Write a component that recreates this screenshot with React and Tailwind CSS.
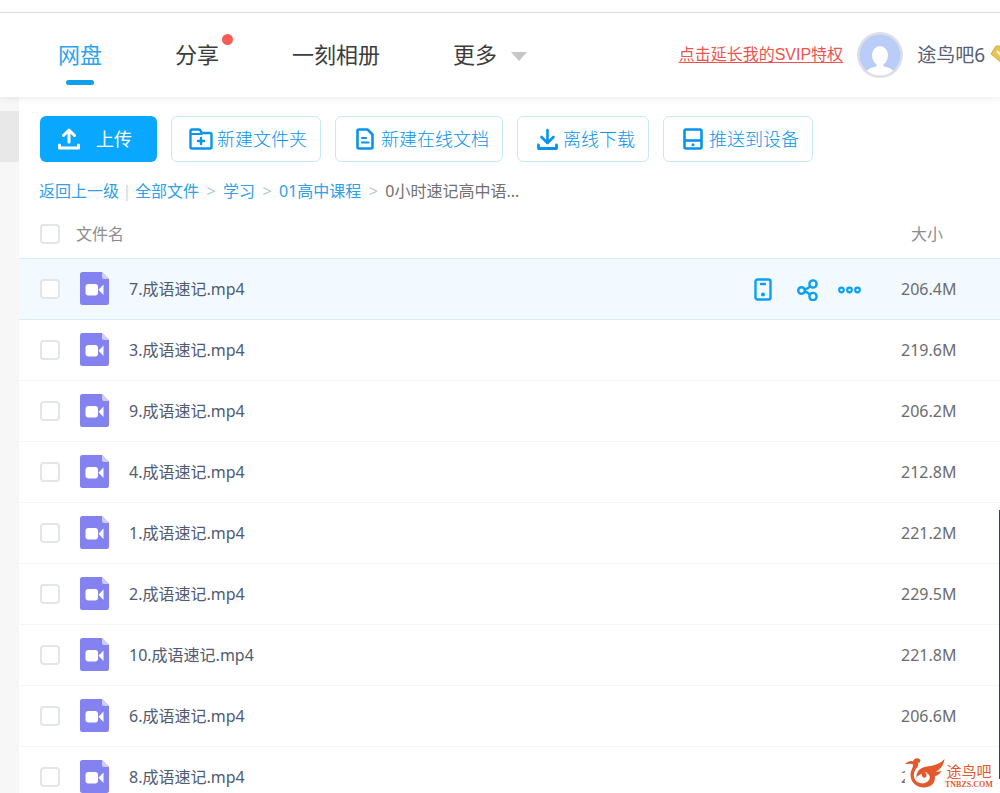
import { useState } from 'react';

const navItems = [
  { label: '网盘', active: true },
  { label: '分享', badge: true },
  { label: '一刻相册' },
];

const files = [
  { name: '7.成语速记.mp4', size: '206.4M' },
  { name: '3.成语速记.mp4', size: '219.6M' },
  { name: '9.成语速记.mp4', size: '206.2M' },
  { name: '4.成语速记.mp4', size: '212.8M' },
  { name: '1.成语速记.mp4', size: '221.2M' },
  { name: '2.成语速记.mp4', size: '229.5M' },
  { name: '10.成语速记.mp4', size: '221.8M' },
  { name: '6.成语速记.mp4', size: '206.6M' },
  { name: '8.成语速记.mp4', size: '2' },
];

const checkboxStyle =
  'block size-5 appearance-none rounded border-2 border-[#e2e6ea] bg-white checked:border-[#09aaff] checked:bg-[#09aaff]';

function UploadIcon() {
  return (
    <svg width="22" height="22" viewBox="0 0 22 22" fill="none" stroke="currentColor" strokeWidth="3" strokeLinecap="round" strokeLinejoin="round">
      <path d="M11 14V3M5.5 7.5 11 2l5.5 5.5" />
      <path d="M1.5 17v3h19v-3" />
    </svg>
  );
}

function FolderPlusIcon() {
  return (
    <svg width="24" height="22" viewBox="0 0 24 22" fill="none" stroke="currentColor" strokeWidth="2.4" strokeLinejoin="round">
      <path d="M1.5 19V3q0-1.500 1.500-1.500h7q1 0 1.500 1L12.500 5H21q1.500 0 1.500 1.500V19q0 1.500-1.500 1.500H3Q1.500 20.500 1.500 19Z" />
      <path d="M1.500 6h12" strokeWidth="2" />
      <path d="M12 10v6M9 13h6" strokeLinecap="round" />
    </svg>
  );
}

function DocIcon() {
  return (
    <svg width="18" height="22" viewBox="0 0 18 22" fill="none" stroke="currentColor" strokeWidth="2.6" strokeLinejoin="round">
      <path d="M3 1.500h8.500l5 5V19q0 1.500-1.500 1.500H3Q1.500 20.500 1.500 19V3Q1.500 1.500 3 1.500Z" />
      <path d="M6 10h4M6 14.500h6.500" strokeWidth="2.200" strokeLinecap="round" />
    </svg>
  );
}

function DownloadIcon() {
  return (
    <svg width="21" height="22" viewBox="0 0 21 22" fill="none" stroke="currentColor" strokeWidth="2.6" strokeLinecap="round" strokeLinejoin="round">
      <path d="M10.500 2v12.500M4.500 9l6 6 6-6" />
      <path d="M1.500 17v3.500h18V17" strokeWidth="2.800" />
    </svg>
  );
}

function DeviceIcon() {
  return (
    <svg width="20" height="22" viewBox="0 0 20 22" fill="none" stroke="currentColor" strokeWidth="2.6">
      <rect x="1.500" y="1.500" width="17" height="19" rx="1.500" />
      <path d="M1.500 12.500h17" />
      <circle cx="10" cy="16.700" r="1.500" fill="currentColor" stroke="none" />
    </svg>
  );
}

function PhoneIcon() {
  return (
    <svg width="18" height="23" viewBox="0 0 18 23" fill="none" stroke="currentColor" strokeWidth="2.400">
      <rect x="1.500" y="1.500" width="15" height="20" rx="2" />
      <path d="M6 6h6" />
      <circle cx="9" cy="16.500" r="2" fill="currentColor" stroke="none" />
    </svg>
  );
}

function ShareIcon() {
  return (
    <svg width="21" height="22" viewBox="0 0 21 22" fill="none" stroke="currentColor" strokeWidth="2.400">
      <circle cx="4.500" cy="11.500" r="3.300" />
      <circle cx="16" cy="5" r="3.600" />
      <circle cx="16" cy="17.500" r="3.600" />
      <path d="M7.500 10.500 10.500 9.500l2.500-2M7.500 12.500l3 1 2.300 2" />
    </svg>
  );
}

function MoreIcon() {
  return (
    <svg width="23" height="8" viewBox="0 0 23 8" fill="none" stroke="currentColor" strokeWidth="2.200">
      <circle cx="3.500" cy="4" r="2.300" />
      <circle cx="11.500" cy="4" r="2.300" />
      <circle cx="19.500" cy="4" r="2.300" />
    </svg>
  );
}

function VideoIcon() {
  return (
    <svg className="block" width="29" height="33" viewBox="0 0 29 33">
      <path d="M2.500 0H22l7 7v23.500a2.500 2.500 0 0 1-2.500 2.500h-24A2.500 2.500 0 0 1 0 30.500v-28A2.500 2.500 0 0 1 2.500 0Z" fill="#8482f0" />
      <path d="M22 0v5a2 2 0 0 0 2 2h5Z" fill="#cfcdfa" />
      <rect x="5.500" y="12" width="12.500" height="11.500" rx="3" fill="#fff" />
      <path d="M18.500 17.700 23.500 12.500v10.500Z" fill="#fff" />
    </svg>
  );
}

function Avatar() {
  return (
    <svg className="shrink-0" width="46" height="46" viewBox="0 0 46 46">
      <defs>
        <clipPath id="avatar-clip">
          <circle cx="23" cy="23" r="20.500" />
        </clipPath>
      </defs>
      <circle cx="23" cy="23" r="23" fill="#dedfe6" />
      <circle cx="23" cy="23" r="20.500" fill="#b9cdf8" />
      <g clipPath="url(#avatar-clip)" fill="#fff">
        <ellipse cx="23" cy="23.500" rx="8" ry="9.500" />
        <path d="M19.500 30h7v4.500q8 1 11 6V46h-29v-5.500q3-5 11-6Z" />
      </g>
    </svg>
  );
}

function GemIcon() {
  return (
    <svg className="shrink-0" width="26" height="20" viewBox="0 0 26 20">
      <path d="M6 1h14l5 8L13 19 1 9Z" fill="#e9c452" stroke="#d8ad3e" strokeWidth="1" strokeLinejoin="round" />
      <path d="M7 6 13 12.500 19 6" fill="none" stroke="#fff3c4" strokeWidth="2.500" />
    </svg>
  );
}

function BirdLogo() {
  return (
    <svg className="shrink-0" width="40" height="30" viewBox="0 0 40 30" fill="#e3592c">
      <path d="M0 6C3 3.500 6 2.500 8 3.500 8.500 1 11-.5 13.500.5c3 1 2 4.500-.500 4.500C14 8 11.500 10 10 12.500 8 16 8.500 19.500 11 23c4 3.500 10 3 13-1 2-3.500 0-6.500-3.500-7 5.500-2 9.500.5 9.500 4.500C30 26 25 29.500 19 29.500 11 29.500 5.500 24 5.500 16.500 5.500 12 8.500 9.500 8 6.500 5.500 5 3 6.500 0 6Z" />
      <path d="M11.500 20C11 13.500 15 9.500 22 8.500c7-.8 13-2.500 17.500-7.500-1 6.500-4 11-9 12.500 2 .4 4 0 6-.5-2.500 4-5.500 5.500-9.500 5.500-1-3-4-4.500-7.500-4.300 2 1 2.500 2.800 1.500 4.800-2 2-4.500-.5-4-3C13.500 17 12 18 11.500 20Z" />
    </svg>
  );
}

const tools = [
  { label: '新建文件夹', icon: FolderPlusIcon },
  { label: '新建在线文档', icon: DocIcon },
  { label: '离线下载', icon: DownloadIcon },
  { label: '推送到设备', icon: DeviceIcon },
];

function Header() {
  return (
    <header className="relative z-10 flex h-[85px] shrink-0 items-center justify-between border-t border-[#dcdcdc] bg-white shadow-[0_2px_6px_rgba(0,0,0,0.07)]">
      <nav className="flex h-full items-center pb-[2px] pl-[58px] text-[22px] text-[#3c3c3c]">
        {navItems.map((item) => (
          <a key={item.label} href="#" className={`relative mr-[73px] whitespace-nowrap ${item.active ? 'text-[#2aa4f0]' : ''}`}>
            {item.label}
            {item.active && <span className="absolute -bottom-[14px] left-1/2 h-[5px] w-7 -translate-x-1/2 rounded-full bg-[#109fe8]" />}
            {item.badge && <span className="absolute -right-[14px] -top-1 size-[11px] rounded-full bg-[#f95b56]" />}
          </a>
        ))}
        <button type="button" className="flex items-center gap-[14px] whitespace-nowrap">
          更多
          <svg className="mt-1" width="16" height="9" viewBox="0 0 16 9" fill="#c6c6c6">
            <path d="M0 0h16L8 9Z" />
          </svg>
        </button>
      </nav>
      <div className="-mr-4 flex items-center">
        <a
          href="#"
          className="mr-[14px] whitespace-nowrap font-['Liberation_Sans','Noto_Sans_CJK_SC',sans-serif] text-base text-[#ee5350] underline underline-offset-2"
        >
          点击延长我的SVIP特权
        </a>
        <Avatar />
        <span className="ml-[14px] mr-[5px] whitespace-nowrap text-[19px] text-[#565d75]">途鸟吧6</span>
        <GemIcon />
      </div>
    </header>
  );
}

function Toolbar() {
  return (
    <div className="flex gap-[14px] pl-[21px] text-lg font-light">
      <button type="button" className="flex h-[46px] w-[117px] shrink-0 items-center gap-4 rounded-md bg-[#0aa7ff] pl-[18px] font-normal text-white">
        <UploadIcon />
        上传
      </button>
      {tools.map(({ label, icon: Icon }) => (
        <button
          key={label}
          type="button"
          className="flex h-[46px] shrink-0 items-center gap-1 whitespace-nowrap rounded-md border border-[#c5e8fc] bg-white pl-[17px] pr-[13px] text-[#0894ee]"
        >
          <span className="flex w-6 justify-center"><Icon /></span>
          {label}
        </button>
      ))}
    </div>
  );
}

function Breadcrumb() {
  return (
    <nav className="mt-[17px] flex h-6 items-center whitespace-nowrap pl-5 text-base text-[#2f9fe8]">
      <a href="#">返回上一级</a>
      <span className="w-4 text-center text-[#c4d8ea]">|</span>
      <a href="#">全部文件</a>
      <span className="w-6 text-center text-[#b9c6e0]">&gt;</span>
      <a href="#">学习</a>
      <span className="w-6 text-center text-[#b9c6e0]">&gt;</span>
      <a href="#">01高中课程</a>
      <span className="w-6 text-center text-[#b9c6e0]">&gt;</span>
      <span className="text-[#707070]">0小时速记高中语...</span>
    </nav>
  );
}

function FileTable() {
  const [selected, setSelected] = useState([]);

  function toggleFile(name) {
    setSelected((current) => (current.includes(name) ? current.filter((item) => item !== name) : [...current, name]));
  }

  function toggleAll() {
    setSelected((current) => (current.length === files.length ? [] : files.map((file) => file.name)));
  }

  return (
    <table className="mt-2 w-full table-fixed border-collapse text-left text-base">
      <thead>
        <tr className="h-[47px] text-[#8c8c8c]">
          <th className="w-[57px] pl-[21px]">
            <input type="checkbox" aria-label="全选" className={checkboxStyle} checked={selected.length === files.length} onChange={toggleAll} />
          </th>
          <th className="font-normal">文件名</th>
          <th className="w-[147px]" aria-label="操作" />
          <th className="w-[99px] pl-[10px] font-normal">大小</th>
        </tr>
      </thead>
      <tbody>
        {files.map((file, index) => (
          <tr
            key={file.name}
            className={`h-[61px] ${index === 0 ? 'border-y border-[#d9ecfb] bg-[#f3faff]' : 'border-b border-[#f2f6fa]'}`}
          >
            <td className="pl-[21px]">
              <input
                type="checkbox"
                aria-label={file.name}
                className={checkboxStyle}
                checked={selected.includes(file.name)}
                onChange={() => toggleFile(file.name)}
              />
            </td>
            <td className="p-0 pl-1">
              <div className="flex items-center gap-5">
                <VideoIcon />
                <a href="#" className="text-[#4f5a73]">{file.name}</a>
              </div>
            </td>
            <td className="p-0">
              {index === 0 && (
                <div className="flex items-center pt-[2px] text-[#09a0f5]">
                  <button type="button" aria-label="推送到设备" className="mr-[25px]"><PhoneIcon /></button>
                  <button type="button" aria-label="分享" className="mr-5"><ShareIcon /></button>
                  <button type="button" aria-label="更多"><MoreIcon /></button>
                </div>
              )}
            </td>
            <td className="text-[#6c6c6c]">{file.size}</td>
          </tr>
        ))}
      </tbody>
    </table>
  );
}

export default function App() {
  return (
    <div className="relative flex h-screen flex-col overflow-hidden bg-white pt-3 font-['Noto_Sans','Noto_Sans_CJK_SC',sans-serif]">
      <Header />
      <div className="flex min-h-0 flex-1">
        <aside className="w-[19px] shrink-0 bg-[#f7f7f7] pt-[14px]">
          <div className="h-[51px] bg-[#e8e8e8]" />
        </aside>
        <main className="min-w-0 flex-1 pt-[19px]">
          <Toolbar />
          <Breadcrumb />
          <FileTable />
        </main>
      </div>
      <div className="absolute bottom-[14px] right-0 h-[269px] w-px bg-[#3c404c]" />
      <div className="absolute bottom-0 right-1 flex h-10 w-[91px] items-center bg-white text-[#e3592c]">
        <BirdLogo />
        <div className="flex flex-col items-center pt-1">
          <span className="text-[15px] leading-5">途鸟吧</span>
          <span className="font-['Liberation_Serif',serif] text-[8px] font-bold leading-2">TNBZS.COM</span>
        </div>
      </div>
    </div>
  );
}
